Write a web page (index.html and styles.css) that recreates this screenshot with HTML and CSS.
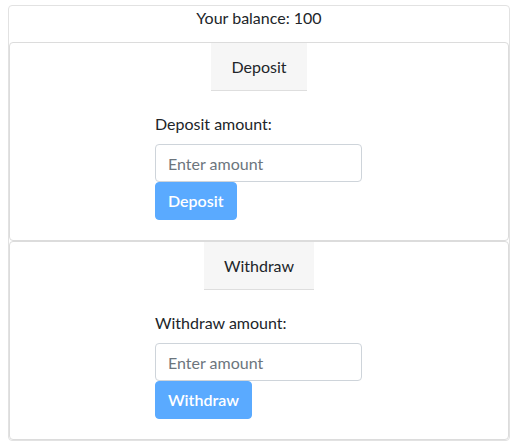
FILE: index.html
```html
<!DOCTYPE html>
<html lang="en">
<head>
<meta charset="utf-8">
<title>Wallet</title>
<link rel="stylesheet" href="styles.css">
</head>
<body>
<div class="wallet">
  <div class="balance">Your balance: 100</div>
  <div class="card">
    <div class="tab-row"><div class="tab">Deposit</div></div>
    <form class="form">
      <label class="label" for="dep">Deposit amount:</label>
      <input class="input" id="dep" type="text" placeholder="Enter amount">
      <button class="btn" type="button" disabled>Deposit</button>
    </form>
  </div>
  <div class="card">
    <div class="tab-row"><div class="tab">Withdraw</div></div>
    <form class="form">
      <label class="label" for="wd">Withdraw amount:</label>
      <input class="input" id="wd" type="text" placeholder="Enter amount">
      <button class="btn" type="button" disabled>Withdraw</button>
    </form>
  </div>
</div>
</body>
</html>
```
FILE: styles.css
```css
html, body {
  margin: 0;
  padding: 0;
  background: #fff;
}
body {
  font-family: Lato, "Open Sans", sans-serif;
  font-size: 16px;
  line-height: 24px;
  color: #212529;
}
.wallet {
  width: 500px;
  margin: 5px 0 0 8px;
  border: 1px solid #e2e2e2;
  border-radius: 4px;
}
.balance {
  text-align: center;
  line-height: 24px;
  margin-bottom: 12px;
}
.card {
  border: 1px solid #dcdcdc;
  border-radius: 4px;
  padding-bottom: 20px;
}
.tab-row {
  display: flex;
  justify-content: center;
}
.tab {
  background: #f6f6f6;
  border-bottom: 1px solid #dedede;
  padding: 12px 20px 11px;
  line-height: 24px;
}
.form {
  width: 208px;
  margin: 21px auto 0;
  display: flex;
  flex-direction: column;
  align-items: flex-start;
}
.label {
  line-height: 24px;
  margin-bottom: 8px;
}
.input {
  box-sizing: border-box;
  width: 207px;
  height: 38px;
  margin: 0;
  padding: 6px 12px;
  border: 1px solid #ced4da;
  border-radius: 4px;
  font-family: inherit;
  font-size: 16px;
  line-height: 24px;
  color: #495057;
  outline: none;
}
.input::placeholder {
  color: #6c757d;
  opacity: 1;
}
.btn {
  box-sizing: border-box;
  height: 38px;
  margin: 0;
  padding: 6px 12px;
  border: 1px solid #5aaaff;
  border-radius: 4px;
  background: #5aaaff;
  color: #fff;
  font-family: inherit;
  font-size: 16px;
  font-weight: 600;
  line-height: 24px;
}
```
